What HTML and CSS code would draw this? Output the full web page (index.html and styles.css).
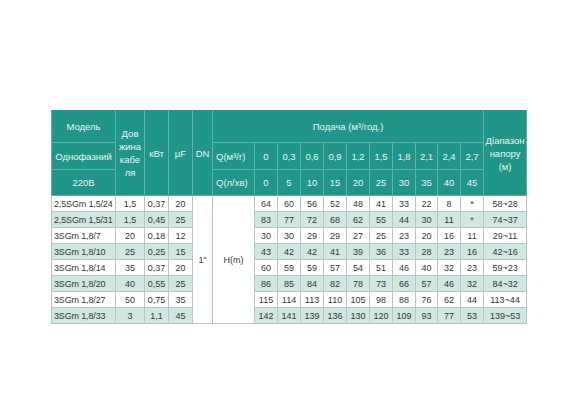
FILE: index.html
```html
<!DOCTYPE html>
<html lang="uk">
<head>
<meta charset="utf-8">
<link rel="stylesheet" href="styles.css">
</head>
<body>
<table class="spec">
  <colgroup>
    <col class="c-model"><col class="c-cable"><col class="c-kw"><col class="c-uf"><col class="c-dn"><col class="c-q">
    <col class="c-n"><col class="c-n"><col class="c-n"><col class="c-n"><col class="c-n"><col class="c-n"><col class="c-n"><col class="c-n2"><col class="c-n"><col class="c-n">
    <col class="c-range">
  </colgroup>
  <thead>
    <tr class="h1">
      <th>Модель</th>
      <th rowspan="3">Дов<br>жина<br>кабе<br>ля</th>
      <th rowspan="3">кВт</th>
      <th rowspan="3">μF</th>
      <th rowspan="3">DN</th>
      <th colspan="11">Подача (м³/год.)</th>
      <th rowspan="3">Діапазон<br>напору<br>(м)</th>
    </tr>
    <tr class="h2">
      <th>Однофазний</th>
      <th class="ql">Q(м³/г)</th>
      <th>0</th><th>0,3</th><th>0,6</th><th>0,9</th><th>1,2</th><th>1,5</th><th>1,8</th><th>2,1</th><th>2,4</th><th>2,7</th>
    </tr>
    <tr class="h3">
      <th>220В</th>
      <th class="ql">Q(л/хв)</th>
      <th>0</th><th>5</th><th>10</th><th>15</th><th>20</th><th>25</th><th>30</th><th>35</th><th>40</th><th>45</th>
    </tr>
  </thead>
  <tbody>
    <tr>
      <td class="m">2,5SGm 1,5/24</td><td>1,5</td><td>0,37</td><td>20</td>
      <td rowspan="8" class="span">1"</td><td rowspan="8" class="span">H(m)</td>
      <td>64</td><td>60</td><td>56</td><td>52</td><td>48</td><td>41</td><td>33</td><td>22</td><td>8</td><td>*</td><td>58~28</td>
    </tr>
    <tr class="alt">
      <td class="m">2,5SGm 1,5/31</td><td>1,5</td><td>0,45</td><td>25</td>
      <td>83</td><td>77</td><td>72</td><td>68</td><td>62</td><td>55</td><td>44</td><td>30</td><td>11</td><td>*</td><td>74~37</td>
    </tr>
    <tr>
      <td class="m">3SGm 1,8/7</td><td>20</td><td>0,18</td><td>12</td>
      <td>30</td><td>30</td><td>29</td><td>29</td><td>27</td><td>25</td><td>23</td><td>20</td><td>16</td><td>11</td><td>29~11</td>
    </tr>
    <tr class="alt">
      <td class="m">3SGm 1,8/10</td><td>25</td><td>0,25</td><td>15</td>
      <td>43</td><td>42</td><td>42</td><td>41</td><td>39</td><td>36</td><td>33</td><td>28</td><td>23</td><td>16</td><td>42~16</td>
    </tr>
    <tr>
      <td class="m">3SGm 1,8/14</td><td>35</td><td>0,37</td><td>20</td>
      <td>60</td><td>59</td><td>59</td><td>57</td><td>54</td><td>51</td><td>46</td><td>40</td><td>32</td><td>23</td><td>59~23</td>
    </tr>
    <tr class="alt">
      <td class="m">3SGm 1,8/20</td><td>40</td><td>0,55</td><td>25</td>
      <td>86</td><td>85</td><td>84</td><td>82</td><td>78</td><td>73</td><td>66</td><td>57</td><td>46</td><td>32</td><td>84~32</td>
    </tr>
    <tr>
      <td class="m">3SGm 1,8/27</td><td>50</td><td>0,75</td><td>35</td>
      <td>115</td><td>114</td><td>113</td><td>110</td><td>105</td><td>98</td><td>88</td><td>76</td><td>62</td><td>44</td><td>113~44</td>
    </tr>
    <tr class="alt">
      <td class="m">3SGm 1,8/33</td><td>3</td><td>1,1</td><td>45</td>
      <td>142</td><td>141</td><td>139</td><td>136</td><td>130</td><td>120</td><td>109</td><td>93</td><td>77</td><td>53</td><td>139~53</td>
    </tr>
  </tbody>
</table>
</body>
</html>
```
FILE: styles.css
```css
html, body {
  margin: 0;
  padding: 0;
  background: #ffffff;
}
body {
  padding: 110px 0 0 51px;
  font-family: "Liberation Sans", Arial, sans-serif;
}
.spec {
  border-collapse: collapse;
  table-layout: fixed;
  width: 475px;
}
.c-model { width: 64px; }
.c-cable { width: 29px; }
.c-kw { width: 24px; }
.c-uf { width: 24px; }
.c-dn { width: 20px; }
.c-q { width: 42px; }
.c-n { width: 23px; }
.c-n2 { width: 22px; }
.c-range { width: 43px; }

.spec th {
  background: #1f9688;
  color: #eaf5f3;
  font-weight: normal;
  font-size: 9.5px;
  line-height: 13px;
  border: 1px solid #5db3a8;
  padding: 0;
  text-align: center;
  vertical-align: middle;
  overflow: hidden;
  white-space: nowrap;
}
.spec thead tr:first-child th { border-top-color: #1f9688; }
.spec th.ql { text-align: left; padding-left: 3px; }
.h1 { height: 32px; }
.h2 { height: 27px; }
.h3 { height: 26px; }

.spec td {
  font-size: 9px;
  color: #383838;
  border: 1px solid #b9c6c3;
  padding: 0;
  height: 15px;
  line-height: 12px;
  text-align: center;
  vertical-align: middle;
  white-space: nowrap;
  overflow: hidden;
  background: #ffffff;
}
.spec td.m { text-align: left; padding-left: 2px; letter-spacing: -0.15px; }
.spec tr.alt td { background: #cfe6e1; }
.spec td.span { background: #ffffff; }
```
